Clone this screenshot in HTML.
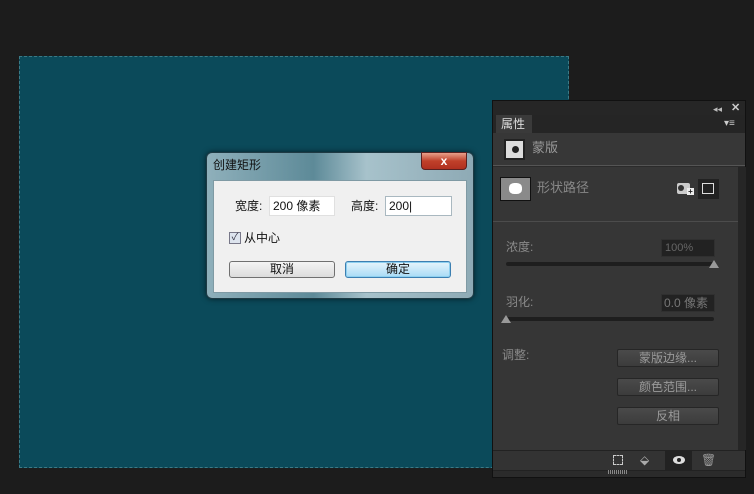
<!DOCTYPE html>
<html><head><meta charset="utf-8"><style>
*{margin:0;padding:0;box-sizing:border-box}
body{width:754px;height:494px;background:#1c1c1c;position:relative;overflow:hidden;font-family:"Liberation Sans","Noto Sans CJK SC",sans-serif;font-size:12px;line-height:14px}
.a{position:absolute}
.t{color:#8a8a8a;font-size:12px}
.btn{position:absolute;background:linear-gradient(#4a4a4a,#3c3c3c);border:1px solid #262626;color:#9a9a9a;text-align:center;font-size:12px;line-height:16px;border-radius:2px}
</style></head><body>
<div class="a" style="left:19px;top:56px;width:550px;height:412px;background:#0b4a5a;border:1px dashed #3c7a86"></div>

<div class="a" style="left:492px;top:100px;width:254px;height:378px;background:#2b2b2b;border:1px solid #111"></div>
<div class="a" style="left:493px;top:101px;width:252px;height:14px;background:#262626"></div>
<div class="a" style="left:713px;top:102px;color:#bbb;font-size:9px">◂◂</div>
<div class="a" style="left:731px;top:101px;color:#ccc;font-size:11px;font-weight:bold">✕</div>
<div class="a" style="left:493px;top:115px;width:252px;height:18px;background:#252525"></div>
<div class="a" style="left:496px;top:115px;width:36px;height:18px;background:#3a3a3a;color:#ddd;font-size:12px;line-height:18px;padding-left:5px">属性</div>
<div class="a" style="left:724px;top:117px;color:#ccc;font-size:10px">▾≡</div>
<div class="a" style="left:493px;top:133px;width:252px;height:33px;background:#373737;border-bottom:1px solid #555"></div>
<div class="a" style="left:504px;top:139px;width:21px;height:21px;background:#ddd;border:2px solid #222"><div class="a" style="left:6px;top:5px;width:7px;height:7px;border-radius:50%;background:#222"></div></div>
<div class="a t" style="left:532px;top:141px;font-size:13px;color:#999">蒙版</div>
<div class="a" style="left:493px;top:167px;width:245px;height:283px;background:#363636"></div>
<div class="a" style="left:738px;top:167px;width:8px;height:283px;background:#262626"></div>
<div class="a" style="left:493px;top:221px;width:245px;height:1px;background:#4c4c4c"></div>
<div class="a" style="left:500px;top:177px;width:31px;height:24px;background:#8a8a8a;border:1px solid #111"><div class="a" style="left:8px;top:5px;width:13px;height:11px;background:#fff;border-radius:40%"></div></div>
<div class="a t" style="left:537px;top:181px;font-size:13px;color:#888">形状路径</div>
<div class="a" style="left:677px;top:183px;width:13px;height:11px;background:#ccc;border-radius:2px"><div class="a" style="left:1px;top:2px;width:6px;height:6px;border-radius:50%;background:#333"></div></div>
<div class="a" style="left:687px;top:188px;width:7px;height:7px;background:#eee;color:#222;font-size:8px;line-height:7px;text-align:center;font-weight:bold">+</div>
<div class="a" style="left:698px;top:179px;width:21px;height:20px;background:#222"><div class="a" style="left:4px;top:4px;width:12px;height:11px;border:1px solid #ddd"></div></div>

<div class="a t" style="left:506px;top:240px">浓度:</div>
<div class="a" style="left:661px;top:239px;width:54px;height:18px;background:#222;border:1px solid #303030;color:#666;font-size:11px;line-height:16px;padding-left:3px">100%</div>
<div class="a" style="left:506px;top:262px;width:208px;height:4px;background:#1e1e1e;border-radius:2px"></div>
<div class="a" style="left:709px;top:260px;width:0;height:0;border-left:5px solid transparent;border-right:5px solid transparent;border-bottom:8px solid #999"></div>
<div class="a t" style="left:506px;top:295px">羽化:</div>
<div class="a" style="left:661px;top:294px;width:54px;height:18px;background:#222;border:1px solid #303030;color:#777;font-size:12px;line-height:16px;padding-left:2px">0.0 像素</div>
<div class="a" style="left:506px;top:317px;width:208px;height:4px;background:#1e1e1e;border-radius:2px"></div>
<div class="a" style="left:501px;top:315px;width:0;height:0;border-left:5px solid transparent;border-right:5px solid transparent;border-bottom:8px solid #999"></div>
<div class="a t" style="left:502px;top:348px">调整:</div>
<div class="btn" style="left:617px;top:349px;width:102px;height:18px">蒙版边缘...</div>
<div class="btn" style="left:617px;top:378px;width:102px;height:18px">颜色范围...</div>
<div class="btn" style="left:617px;top:407px;width:102px;height:18px">反相</div>
<div class="a" style="left:493px;top:450px;width:252px;height:21px;background:#333;border-top:1px solid #222;border-bottom:1px solid #222"></div>
<div class="a" style="left:613px;top:455px;width:10px;height:10px;border:1px dashed #ccc"></div>
<div class="a" style="left:640px;top:453px;color:#aaa;font-size:12px">⬙</div>
<div class="a" style="left:665px;top:451px;width:27px;height:20px;background:#222"></div>
<div class="a" style="left:673px;top:456px;width:12px;height:8px;background:#ddd;border-radius:50%"><div class="a" style="left:4px;top:2px;width:4px;height:4px;background:#222;border-radius:50%"></div></div>
<div class="a" style="left:701px;top:453px;color:#999;font-size:12px">🗑</div>
<div class="a" style="left:608px;top:470px;width:20px;height:4px;background:repeating-linear-gradient(90deg,#888 0 1px,transparent 1px 2px)"></div>

<div class="a" style="left:206px;top:152px;width:268px;height:147px;border-radius:6px;background:linear-gradient(90deg,#8fb0bb,#5d8a98 40%,#a7c2cb 60%,#8eaab5);border:1px solid #1e3a44;box-shadow:0 0 6px rgba(0,0,0,.6)"></div>
<div class="a" style="left:213px;top:158px;font-size:12px;color:#111">创建矩形</div>
<div class="a" style="left:421px;top:152px;width:46px;height:18px;background:linear-gradient(#e8a08a,#c0402a 50%,#b03020);border:1px solid #5a2020;border-radius:0 0 4px 4px;color:#fff;text-align:center;font-weight:bold;font-size:12px;line-height:16px">x</div>
<div class="a" style="left:213px;top:180px;width:254px;height:113px;background:#f0f0f0;border:1px solid #7f9aa4"></div>
<div class="a" style="left:235px;top:199px;color:#111">宽度:</div>
<div class="a" style="left:269px;top:196px;width:66px;height:20px;background:#fff;border:1px solid #e0e0e0;color:#111;line-height:18px;padding-left:3px">200 像素</div>
<div class="a" style="left:351px;top:199px;color:#111">高度:</div>
<div class="a" style="left:385px;top:196px;width:67px;height:20px;background:#fff;border:1px solid #a9b8c0;color:#111;line-height:18px;padding-left:3px">200|</div>
<div class="a" style="left:229px;top:232px;width:12px;height:12px;background:#dde4ee;border:1px solid #778;color:#334;font-size:10px;line-height:10px;text-align:center">✓</div>
<div class="a" style="left:244px;top:231px;color:#111">从中心</div>
<div class="a" style="left:229px;top:261px;width:106px;height:17px;background:linear-gradient(#f4f4f4,#dcdcdc);border:1px solid #707070;border-radius:3px;text-align:center;line-height:15px;color:#111">取消</div>
<div class="a" style="left:345px;top:261px;width:106px;height:17px;background:linear-gradient(#e6f5fc,#a9dbf6);border:1px solid #3c7fb1;border-radius:3px;text-align:center;line-height:15px;color:#111;box-shadow:inset 0 0 0 1px #8ed0f0">确定</div>
</body></html>
